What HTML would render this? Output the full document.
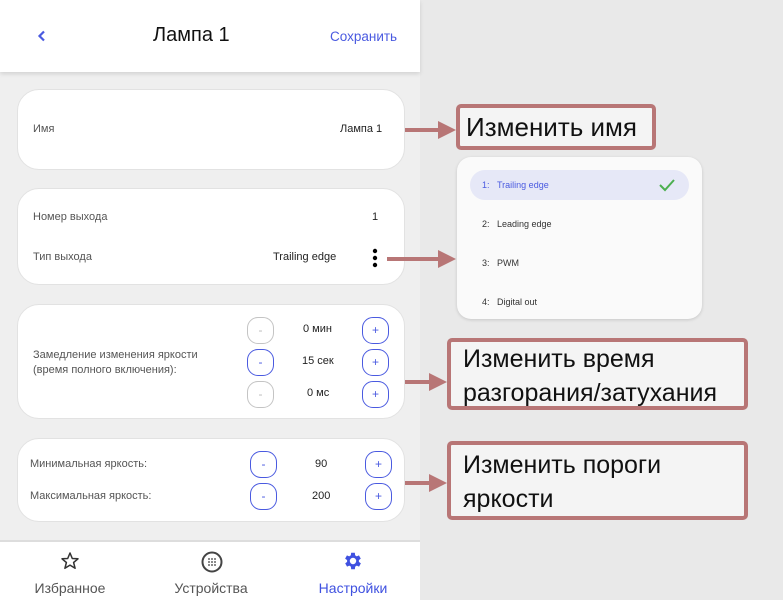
<!DOCTYPE html>
<html><head><meta charset="utf-8"><style>
*{margin:0;padding:0;box-sizing:border-box}
body{width:783px;height:600px;background:#e9e9e9;font-family:"Liberation Sans",sans-serif;position:relative;overflow:hidden}
.a{position:absolute}
.phone{left:0;top:0;width:420px;height:600px;background:#efefef}
.hdr{left:0;top:0;width:420px;height:72px;background:#fff;box-shadow:0 2px 4px rgba(0,0,0,.12)}
.card{background:#fff;border-radius:22px;border:1px solid #e2e2e2}
.lbl{font-size:11px;color:#555}
.val{font-size:11px;color:#222}
.btn{width:27px;height:27px;border:1.5px solid #4a5ae0;border-radius:11px;color:#4a5ae0;font-size:12px;text-align:center;line-height:24px}
.btn.d{border-color:#c4c4c4;color:#bbb}
.box{border:4px solid #b87676;border-radius:5px;background:#f4f4f4;font-size:25px;color:#111;padding-left:12px;line-height:34px}
.line{background:#b87676;height:4px}
.tri{width:0;height:0;border-top:9px solid transparent;border-bottom:9px solid transparent;border-left:18px solid #b87676}
.dd{background:#fafafa;border-radius:14px;box-shadow:0 1px 3px rgba(0,0,0,.15)}
.it{font-size:9px;color:#333}
.nav{font-size:14px;color:#555;text-align:center;width:140px}
</style></head><body>
<div class="a phone"></div>
<div class="a hdr">
 <svg class="a" style="left:37px;top:30px" width="10" height="12"><path d="M7 1.5 L2.5 6 L7 10.5" stroke="#4a5ae0" stroke-width="2.2" fill="none"/></svg>
 <div class="a" style="left:153px;top:24px;font-size:20px;color:#111">Лампа 1</div>
 <div class="a" style="left:330px;top:29px;font-size:13.5px;color:#4a5ae0">Сохранить</div>
</div>
<div class="a card" style="left:17px;top:89px;width:388px;height:81px"></div>
<div class="a lbl" style="left:33px;top:123px">Имя</div>
<div class="a val" style="left:340px;top:123px">Лампа 1</div>

<div class="a card" style="left:17px;top:188px;width:388px;height:97px"></div>
<div class="a lbl" style="left:33px;top:211px">Номер выхода</div>
<div class="a val" style="left:372px;top:211px">1</div>
<div class="a lbl" style="left:33px;top:251px">Тип выхода</div>
<div class="a val" style="left:273px;top:251px">Trailing edge</div>
<svg class="a" style="left:371px;top:248px" width="8" height="20"><circle cx="4" cy="3" r="2.2"/><circle cx="4" cy="10" r="2.2"/><circle cx="4" cy="17" r="2.2"/></svg>

<div class="a card" style="left:17px;top:304px;width:388px;height:115px"></div>
<div class="a lbl" style="left:33px;top:348px;line-height:15px">Замедление изменения яркости<br>(время полного включения):</div>
<div class="a btn d" style="left:247px;top:317px">-</div><div class="a val" style="left:303px;top:323px">0 мин</div><div class="a btn" style="left:362px;top:317px">+</div>
<div class="a btn" style="left:247px;top:349px">-</div><div class="a val" style="left:302px;top:355px">15 сек</div><div class="a btn" style="left:362px;top:349px">+</div>
<div class="a btn d" style="left:247px;top:381px">-</div><div class="a val" style="left:307px;top:387px">0 мс</div><div class="a btn" style="left:362px;top:381px">+</div>

<div class="a card" style="left:17px;top:438px;width:388px;height:84px"></div>
<div class="a lbl" style="left:30px;top:458px">Минимальная яркость:</div>
<div class="a lbl" style="left:30px;top:490px">Максимальная яркость:</div>
<div class="a btn" style="left:250px;top:451px">-</div><div class="a val" style="left:315px;top:458px">90</div><div class="a btn" style="left:365px;top:451px">+</div>
<div class="a btn" style="left:250px;top:483px">-</div><div class="a val" style="left:312px;top:490px">200</div><div class="a btn" style="left:365px;top:483px">+</div>

<div class="a" style="left:0;top:540px;width:420px;height:60px;background:#fff;border-top:2px solid #ddd"></div>
<svg class="a" style="left:60px;top:551px" width="20" height="20"><path d="M10 2 L12.3 7.5 L18 7.8 L13.6 11.5 L15.1 17.3 L10 14.1 L4.9 17.3 L6.4 11.5 L2 7.8 L7.7 7.5 Z" fill="none" stroke="#333" stroke-width="1.5" stroke-linejoin="round"/></svg>
<svg class="a" style="left:200px;top:551px" width="24" height="22"><circle cx="12" cy="11" r="9.5" fill="none" stroke="#444" stroke-width="2"/><g fill="#666"><circle cx="9" cy="8" r="1"/><circle cx="12" cy="8" r="1"/><circle cx="15" cy="8" r="1"/><circle cx="9" cy="11" r="1"/><circle cx="12" cy="11" r="1"/><circle cx="15" cy="11" r="1"/><circle cx="9" cy="14" r="1"/><circle cx="12" cy="14" r="1"/><circle cx="15" cy="14" r="1"/></g></svg>
<svg class="a" style="left:342px;top:550px" width="22" height="22" viewBox="0 0 24 24"><path fill="#3f51e0" d="M19.4 13a7.8 7.8 0 0 0 0-2l2.1-1.6-2-3.5-2.5 1a7.5 7.5 0 0 0-1.700-1L15 3h-4l-.4 2.9a7.5 7.5 0 0 0-1.700 1l-2.500-1-2 3.500L6.600 11a7.800 7.800 0 0 0 0 2l-2.100 1.600 2 3.500 2.500-1a7.500 7.500 0 0 0 1.700 1L11 21h4l.4-2.900a7.500 7.500 0 0 0 1.700-1l2.500 1 2-3.500zM13 15.500a3.500 3.500 0 1 1 0-7 3.500 3.500 0 0 1 0 7z" transform="translate(-1 0)"/></svg>
<div class="a nav" style="left:0;top:580px">Избранное</div>
<div class="a nav" style="left:141px;top:580px">Устройства</div>
<div class="a nav" style="left:283px;top:580px;color:#3f51e0">Настройки</div>

<div class="a line" style="left:405px;top:128px;width:35px"></div><div class="a tri" style="left:438px;top:121px"></div>
<div class="a line" style="left:387px;top:257px;width:53px"></div><div class="a tri" style="left:438px;top:250px"></div>
<div class="a line" style="left:405px;top:380px;width:26px"></div><div class="a tri" style="left:429px;top:373px"></div>
<div class="a line" style="left:405px;top:481px;width:26px"></div><div class="a tri" style="left:429px;top:474px"></div>

<div class="a box" style="left:456px;top:104px;width:200px;height:46px;line-height:38px;padding-left:6px;font-size:26px">Изменить имя</div>
<div class="a box" style="left:447px;top:338px;width:301px;height:72px">Изменить время<br>разгорания/затухания</div>
<div class="a box" style="left:447px;top:441px;width:301px;height:79px;padding-top:3px">Изменить пороги<br>яркости</div>

<div class="a dd" style="left:457px;top:157px;width:245px;height:162px"></div>
<div class="a" style="left:470px;top:170px;width:219px;height:30px;background:#e6e8f7;border-radius:15px"></div>
<div class="a it" style="left:482px;top:180px;color:#4a5ae0">1:&nbsp;&nbsp;&nbsp;Trailing edge</div>
<svg class="a" style="left:658px;top:178px" width="18" height="14"><path d="M2 7 L7 12 L16 2" stroke="#4caf50" stroke-width="2" fill="none"/></svg>
<div class="a it" style="left:482px;top:219px">2:&nbsp;&nbsp;&nbsp;Leading edge</div>
<div class="a it" style="left:482px;top:258px">3:&nbsp;&nbsp;&nbsp;PWM</div>
<div class="a it" style="left:482px;top:297px">4:&nbsp;&nbsp;&nbsp;Digital out</div>
</body></html>
